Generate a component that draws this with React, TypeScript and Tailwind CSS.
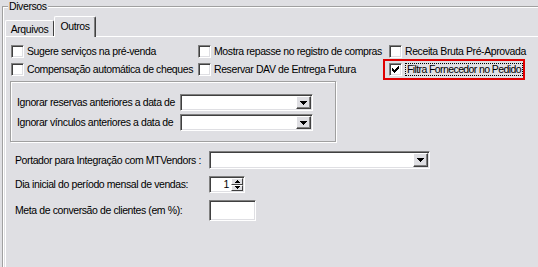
import React from "react";

const FONT = "font-['Liberation_Sans',Arial,sans-serif]";

const CheckMark = () => (
  <svg width="7" height="7" viewBox="0 0 7 7" shapeRendering="crispEdges">
    <rect x="0" y="2" width="1" height="3" fill="#000" />
    <rect x="1" y="3" width="1" height="3" fill="#000" />
    <rect x="2" y="4" width="1" height="3" fill="#000" />
    <rect x="3" y="3" width="1" height="3" fill="#000" />
    <rect x="4" y="2" width="1" height="3" fill="#000" />
    <rect x="5" y="1" width="1" height="3" fill="#000" />
    <rect x="6" y="0" width="1" height="3" fill="#000" />
  </svg>
);

const Check = ({ checked }: { checked?: boolean }) => (
  <span className="flex h-[13px] w-[13px] shrink-0 items-center justify-center border border-t-[#808080] border-l-[#808080] border-r-white border-b-white bg-white shadow-[inset_1px_1px_0_#404040,inset_-1px_-1px_0_#dfdfe3]">
    {checked && <CheckMark />}
  </span>
);

const CheckItem = ({ label, checked, focused }: { label: string; checked?: boolean; focused?: boolean }) => (
  <div className="flex h-[18px] items-center gap-[3px]">
    <Check checked={checked} />
    {focused ? (
      <span className="whitespace-nowrap border border-dotted border-black px-[1px] leading-[11px] tracking-[-0.6px]">{label}</span>
    ) : (
      <span className="whitespace-nowrap">{label}</span>
    )}
  </div>
);

const DownArrow = () => (
  <svg width="7" height="4" viewBox="0 0 7 4" shapeRendering="crispEdges">
    <rect x="0" y="0" width="7" height="1" fill="#000" />
    <rect x="1" y="1" width="5" height="1" fill="#000" />
    <rect x="2" y="2" width="3" height="1" fill="#000" />
    <rect x="3" y="3" width="1" height="1" fill="#000" />
  </svg>
);

const Combo = ({ width }: { width: string }) => (
  <div
    className={`flex shrink-0 justify-end border border-t-[#808080] border-l-[#808080] border-r-white border-b-white bg-white p-[1px] shadow-[inset_1px_1px_0_#404040,inset_-1px_-1px_0_#dfdfe3] ${width}`}
  >
    <div className="flex w-[15px] items-center justify-center border border-t-white border-l-white border-r-[#404040] border-b-[#404040] bg-[#dfdfe3] shadow-[inset_-1px_-1px_0_#808080]">
      <DownArrow />
    </div>
  </div>
);

const SpinBtn = ({ up }: { up?: boolean }) => (
  <div className="flex flex-1 items-center justify-center border border-t-white border-l-white border-r-[#404040] border-b-[#404040] bg-[#dfdfe3]">
    <svg width="5" height="3" viewBox="0 0 5 3" shapeRendering="crispEdges">
      {up ? (
        <>
          <rect x="2" y="0" width="1" height="1" fill="#000" />
          <rect x="1" y="1" width="3" height="1" fill="#000" />
          <rect x="0" y="2" width="5" height="1" fill="#000" />
        </>
      ) : (
        <>
          <rect x="0" y="0" width="5" height="1" fill="#000" />
          <rect x="1" y="1" width="3" height="1" fill="#000" />
          <rect x="2" y="2" width="1" height="1" fill="#000" />
        </>
      )}
    </svg>
  </div>
);

export default function App() {
  return (
    <div className={`flex h-[267px] w-[538px] flex-col overflow-hidden bg-[#dfdfe3] pl-[2px] pt-[6px] text-[10.5px] leading-none tracking-[-0.4px] text-black ${FONT}`}>
      {/* Diversos group */}
      <div className="relative flex w-[560px] shrink-0 flex-1 flex-col border-l border-t border-[#a0a0a0] pl-[2px] pt-[9px] shadow-[inset_1px_1px_0_#fff]">
        <span className="absolute -top-[7px] left-[5px] bg-[#dfdfe3] px-[1px] leading-[13px]">Diversos</span>

        {/* tabs */}
        <div className="flex h-[20px] items-end">
          <div className="flex h-[16px] w-[49px] items-center justify-center rounded-t-[2px] border-l border-t border-r border-l-white border-t-white border-r-[#404040] pt-[1px]">
            Arquivos
          </div>
          <div className="relative z-10 -mb-[1px] flex h-[21px] w-[42px] items-start justify-center rounded-t-[2px] border-l border-t border-r border-l-white border-t-white border-r-[#404040] bg-[#dfdfe3] pt-[4px] shadow-[inset_-1px_0_0_#808080]">
            Outros
          </div>
        </div>

        {/* tab panel */}
        <div className="flex flex-1 flex-col border-l border-t border-white pl-[4px] pt-[5px]">
          <div className="grid grid-cols-[187px_191px_1fr] pl-[1px]">
            <CheckItem label="Sugere serviços na pré-venda" />
            <CheckItem label="Mostra repasse no registro de compras" />
            <CheckItem label="Receita Bruta Pré-Aprovada" />
            <CheckItem label="Compensação automática de cheques" />
            <CheckItem label="Reservar DAV de Entrega Futura" />
            <div className="relative">
              <CheckItem label="Filtra Fornecedor no Pedido" checked focused />
              <span className="pointer-events-none absolute -left-[6px] -top-[1px] h-[21px] w-[142px] border-2 border-[#e00000]" />
            </div>
          </div>

          {/* date options */}
          <div className="mt-[3px] flex w-[326px] flex-col gap-[3px] border border-[#a0a0a0] pb-[10px] pl-[6px] pt-[12px] shadow-[inset_1px_1px_0_#fff,1px_1px_0_#fff]">
            <div className="flex h-[17px] items-center">
              <span className="w-[163px] shrink-0 whitespace-nowrap">Ignorar reservas anteriores a data de</span>
              <Combo width="h-[17px] w-[133px]" />
            </div>
            <div className="flex h-[17px] items-center">
              <span className="w-[163px] shrink-0 whitespace-nowrap">Ignorar vínculos anteriores a data de</span>
              <Combo width="h-[17px] w-[133px]" />
            </div>
          </div>

          {/* other fields */}
          <div className="mt-[9px] flex flex-col gap-[7px] pl-[5px]">
            <div className="flex h-[18px] items-center">
              <span className="w-[194px] shrink-0 whitespace-nowrap">Portador para Integração com MTVendors :</span>
              <Combo width="h-[18px] w-[221px]" />
            </div>
            <div className="flex h-[17px] items-center">
              <span className="w-[194px] shrink-0 whitespace-nowrap">Dia inicial do período mensal de vendas:</span>
              <div className="flex h-[17px] w-[36px] shrink-0 items-stretch border border-t-[#808080] border-l-[#808080] border-r-white border-b-white bg-white p-[1px] shadow-[inset_1px_1px_0_#404040,inset_-1px_-1px_0_#dfdfe3]">
                <span className="flex flex-1 items-center justify-end pr-[2px]">1</span>
                <div className="flex w-[12px] flex-col">
                  <SpinBtn up />
                  <SpinBtn />
                </div>
              </div>
            </div>
            <div className="flex h-[21px] items-center">
              <span className="w-[194px] shrink-0 whitespace-nowrap">Meta de conversão de clientes (em %):</span>
              <div className="h-[21px] w-[47px] shrink-0 border border-t-[#808080] border-l-[#808080] border-r-white border-b-white bg-white shadow-[inset_1px_1px_0_#404040,inset_-1px_-1px_0_#dfdfe3]" />
            </div>
          </div>
        </div>
      </div>
    </div>
  );
}
